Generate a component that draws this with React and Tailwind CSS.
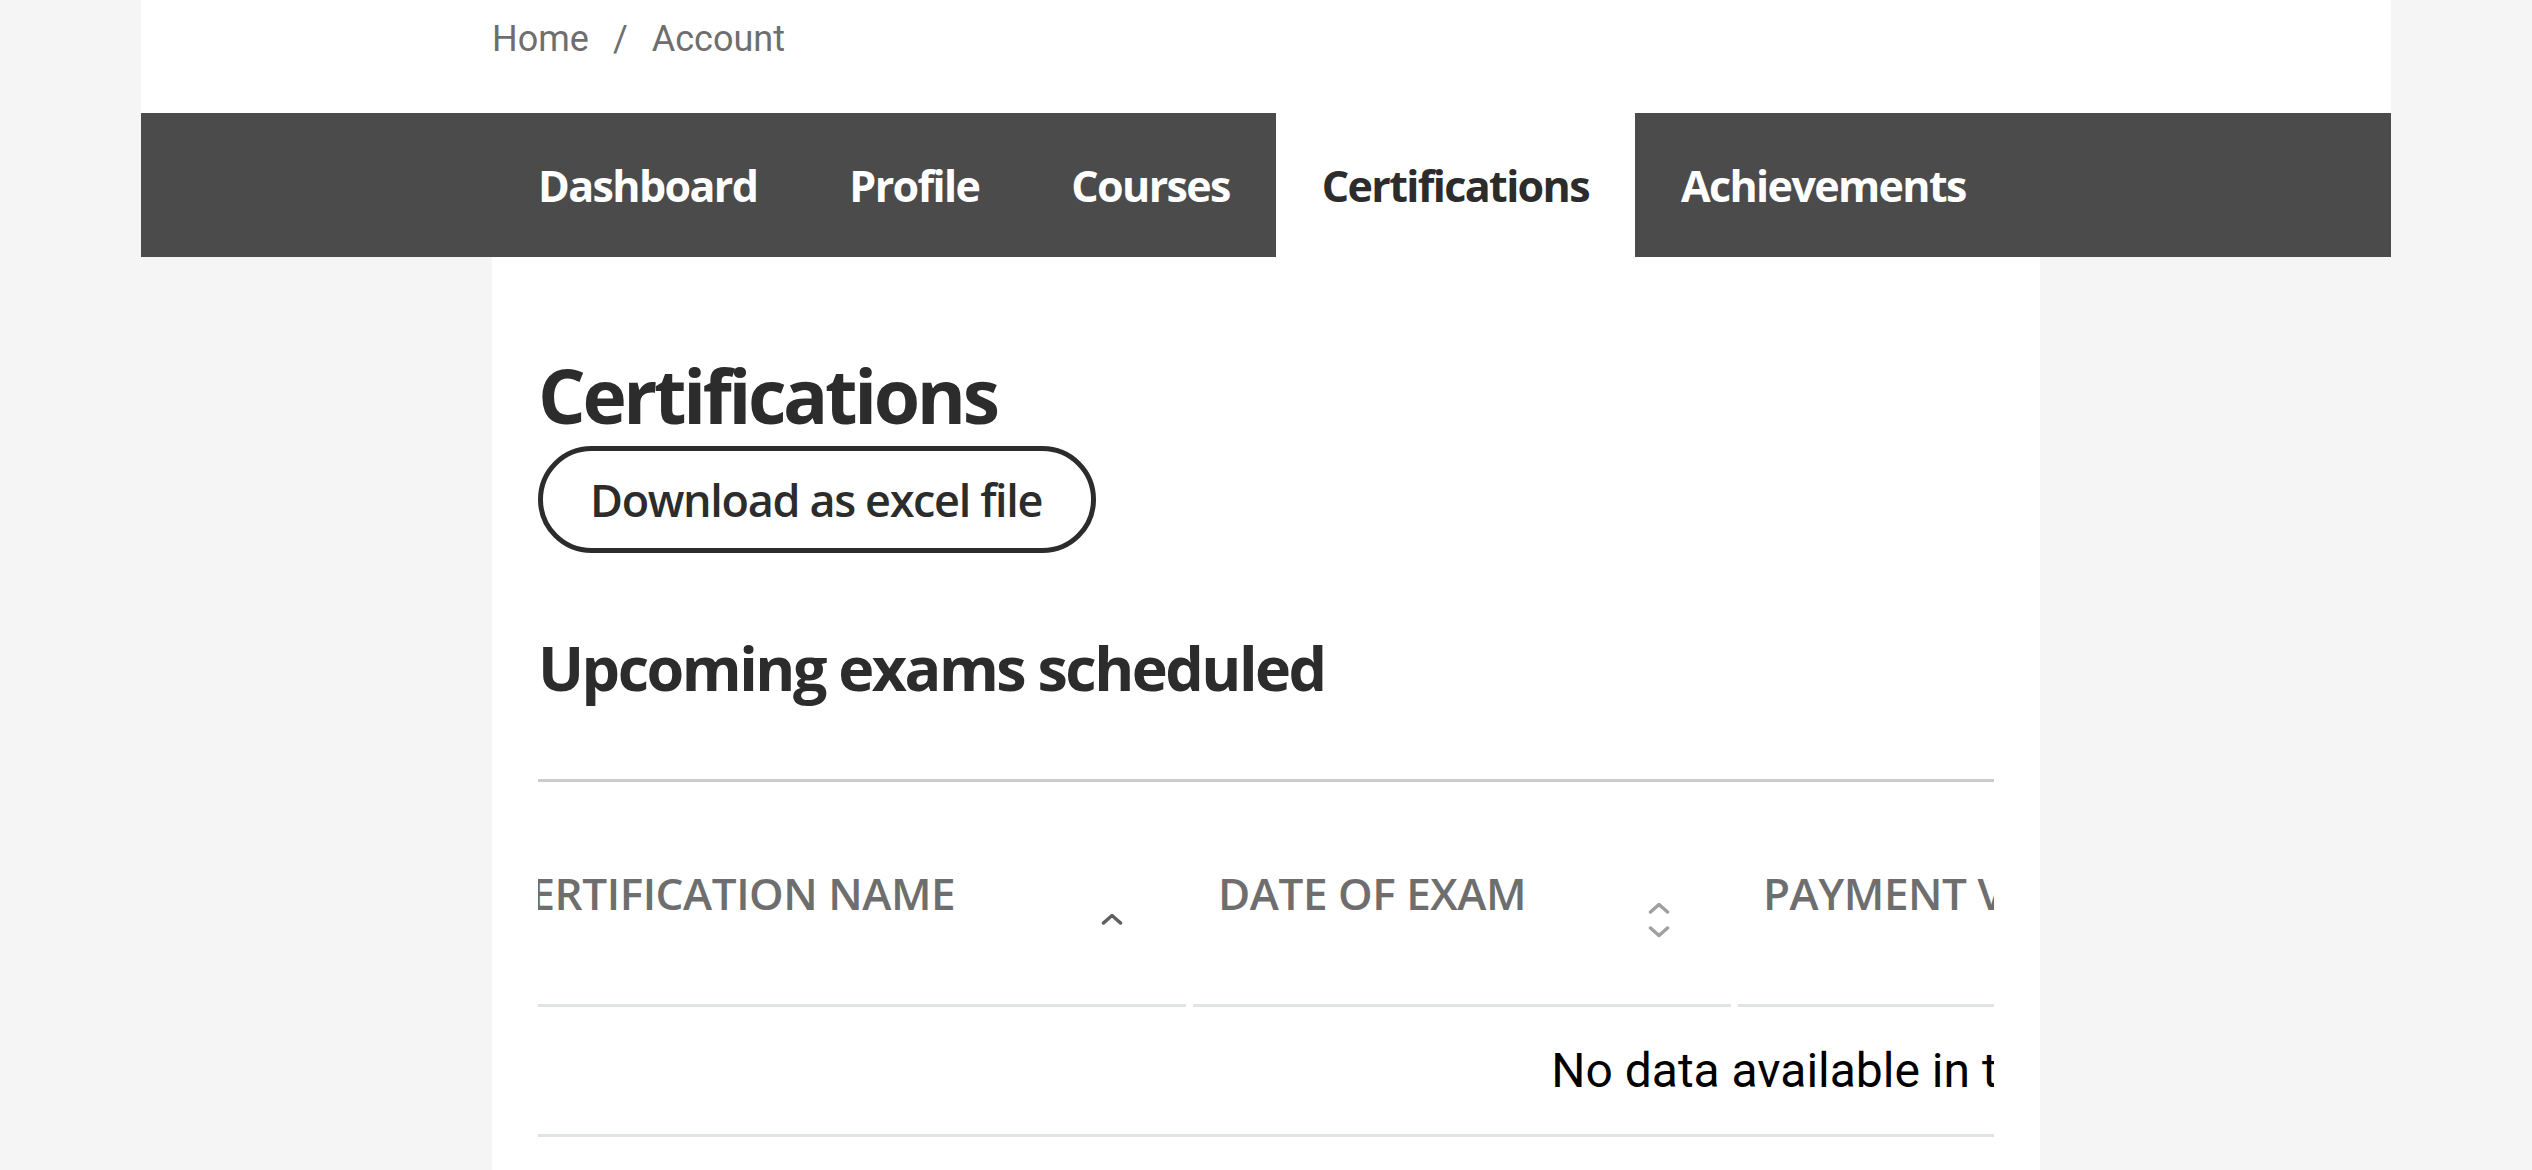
import React from "react";

function Chevron({ dir, className }) {
  return (
    <svg
      width="22"
      height="12"
      viewBox="0 0 22 12"
      fill="none"
      className={className}
    >
      <path
        d={dir === "up" ? "M2.5 10 L11 2.5 L19.5 10" : "M2.5 2 L11 9.5 L19.5 2"}
        stroke="currentColor"
        strokeWidth="3.5"
        strokeLinecap="round"
        strokeLinejoin="round"
      />
    </svg>
  );
}

const tabs = ["Dashboard", "Profile", "Courses", "Certifications", "Achievements"];

export default function App() {
  return (
    <div className="min-h-screen bg-[#f5f5f5] font-['Open_Sans',sans-serif]">
      <div className="mx-auto w-[2250px]">
        <div className="h-[113px] bg-white">
          <nav className="mx-auto flex w-[1548px] gap-[24px] pt-[12px] font-['Roboto',sans-serif] text-[36px] leading-[54px] text-[#6e6e6e]">
            <span>Home</span>
            <span>/</span>
            <span>Account</span>
          </nav>
        </div>
        <div className="h-[144px] bg-[#4b4b4b]">
          <ul className="mx-auto flex h-full w-[1548px]">
            {tabs.map((t) => (
              <li
                key={t}
                className={
                  t === "Certifications"
                    ? "flex h-full items-center bg-white px-[46px] text-[43px] font-bold leading-none tracking-[-0.038em] text-[#2c2c2c]"
                    : "flex h-full items-center px-[46px] text-[43px] font-bold leading-none tracking-[-0.038em] text-white"
                }
              >
                {t}
              </li>
            ))}
          </ul>
        </div>
      </div>

      <main className="mx-auto w-[1548px] bg-white px-[46px] pb-[60px] pt-[98px] text-[#2c2c2c]">
        <h1 className="text-[75px] font-bold leading-[80px] tracking-[-0.045em]">
          Certifications
        </h1>
        <button className="mt-[11px] inline-flex h-[107px] items-center rounded-full border-[5px] border-[#2c2c2c] bg-white pl-[47px] pr-[49px] text-[45px] font-semibold leading-none tracking-[-0.03em] text-[#2c2c2c]">
          Download as excel file
        </button>
        <h2 className="mt-[80px] text-[61px] font-bold leading-[70px] tracking-[-0.041em]">
          Upcoming exams scheduled
        </h2>

        <div className="mt-[76px] w-full overflow-hidden">
          <table className="-ml-[67px] w-[2697px] table-fixed border-separate border-spacing-x-[7px] border-spacing-y-0 border-t-[3px] border-[#cccccc]">
            <thead>
              <tr className="text-left text-[44px] font-semibold uppercase tracking-[-0.01em] text-[#6e6e6e]">
                <th className="relative h-[225px] w-[708px] whitespace-nowrap border-b-[3px] border-[#e1e4e5] pl-[25px] align-middle font-semibold">
                  Certification Name
                  <Chevron dir="up" className="absolute right-[63px] top-[131px] text-[#5f5f5f]" />
                </th>
                <th className="relative h-[225px] w-[538px] whitespace-nowrap border-b-[3px] border-[#e1e4e5] pl-[25px] align-middle font-semibold">
                  Date of exam
                  <Chevron dir="up" className="absolute right-[61px] top-[120px] text-[#a0a0a0]" />
                  <Chevron dir="down" className="absolute right-[61px] top-[144px] text-[#a0a0a0]" />
                </th>
                <th className="relative h-[225px] w-[560px] whitespace-nowrap border-b-[3px] border-[#e1e4e5] pl-[25px] align-middle font-semibold">
                  Payment voucher
                </th>
                <th className="relative h-[225px] w-[420px] whitespace-nowrap border-b-[3px] border-[#e1e4e5] pl-[25px] align-middle font-semibold">
                  Status
                </th>
                <th className="relative h-[225px] w-[429px] whitespace-nowrap border-b-[3px] border-[#e1e4e5] pl-[25px] align-middle font-semibold">
                  Action
                </th>
              </tr>
            </thead>
            <tbody>
              <tr>
                <td
                  colSpan={5}
                  className="h-[130px] whitespace-nowrap border-b-[3px] border-[#e1e4e5] text-center align-middle font-['Roboto',sans-serif] text-[48px] text-black"
                >
                  No data available in table
                </td>
              </tr>
            </tbody>
          </table>
        </div>
      </main>
    </div>
  );
}
